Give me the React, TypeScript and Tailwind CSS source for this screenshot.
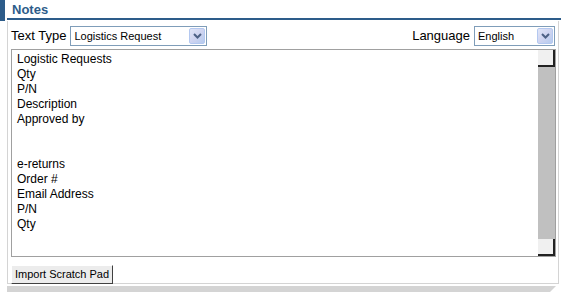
import React from "react";

function Chevron() {
  return (
    <svg width="9" height="6" viewBox="0 0 9 6" className="block">
      <path d="M1 1 L4.5 4.5 L8 1" stroke="#4d6185" strokeWidth="2" fill="none" />
    </svg>
  );
}

function Select({ value, width }: { value: string; width: string }) {
  return (
    <div className={`${width} h-[20px] border border-[#7f9db9] bg-white flex items-center justify-between`}>
      <span className="pl-[3px] text-[11px] leading-[14px] text-black">{value}</span>
      <div className="w-[16px] h-[16px] mr-[1px] rounded-[2px] border border-[#b4c8f0] bg-gradient-to-br from-[#e1e6f8] via-[#cfd4f0] to-[#b6cbee] flex items-center justify-center">
        <Chevron />
      </div>
    </div>
  );
}

export default function App() {
  const lines = [
    "Logistic Requests",
    "Qty",
    "P/N",
    "Description",
    "Approved by",
    "",
    "",
    "e-returns",
    "Order #",
    "Email Address",
    "P/N",
    "Qty",
  ];
  return (
    <div className="w-[561px] h-[292px] bg-white overflow-hidden font-['Liberation_Sans',Arial,sans-serif] text-black">
      <div className="flex">
        <div className="w-[5px] h-[21px] bg-[#2d5c8a]" />
        <div className="ml-[2px] w-[554px] h-[20px] border-b-2 border-[#2d5c8a]">
          <span className="block pl-[5px] pt-[3px] text-[13px] leading-[13px] font-bold text-[#2d5c8a]">Notes</span>
        </div>
      </div>
      <div className="ml-[7px] w-[552px] h-[263px] border border-t-0 border-[#d4d4d4] pl-[3px] pt-[5px]">
        <div className="flex items-center w-[544px]">
          <span className="text-[13px] leading-[16px]">Text Type</span>
          <div className="ml-[4px]">
            <Select value="Logistics Request" width="w-[137px]" />
          </div>
          <div className="flex-1" />
          <span className="text-[13px] leading-[16px]">Language</span>
          <div className="ml-[4px]">
            <Select value="English" width="w-[81px]" />
          </div>
        </div>
        <div className="mt-[3px] w-[545px] h-[208px] border border-[#a0a0a0] flex">
          <div className="flex-1 pl-[5px] pt-[2px]">
            {lines.map((l, i) => (
              <div key={i} className="text-[12px] leading-[15px] h-[15px]">
                {l}
              </div>
            ))}
          </div>
          <div className="w-[17px] h-full flex flex-col bg-[#c0c0c0]">
            <div className="h-[17px] bg-[#f0f0f0] border-r-2 border-b-2 border-[#222]" />
            <div className="flex-1" />
            <div className="h-[17px] bg-[#f0f0f0] border-r-2 border-b-2 border-[#222]" />
          </div>
        </div>
        <div className="mt-[4px]">
          <button className="w-[102px] h-[19px] bg-[#ececec] border border-t-white border-l-white border-r-[#404040] border-b-[#404040] text-[11px] leading-[15px] text-black text-center">
            Import Scratch Pad
          </button>
        </div>
      </div>
      <div className="ml-[7px] mt-[2px] w-[549px] h-[8px] bg-[#d4d4d4] [clip-path:polygon(0_0,100%_0,calc(100%-8px)_100%,0_100%)]" />
    </div>
  );
}
